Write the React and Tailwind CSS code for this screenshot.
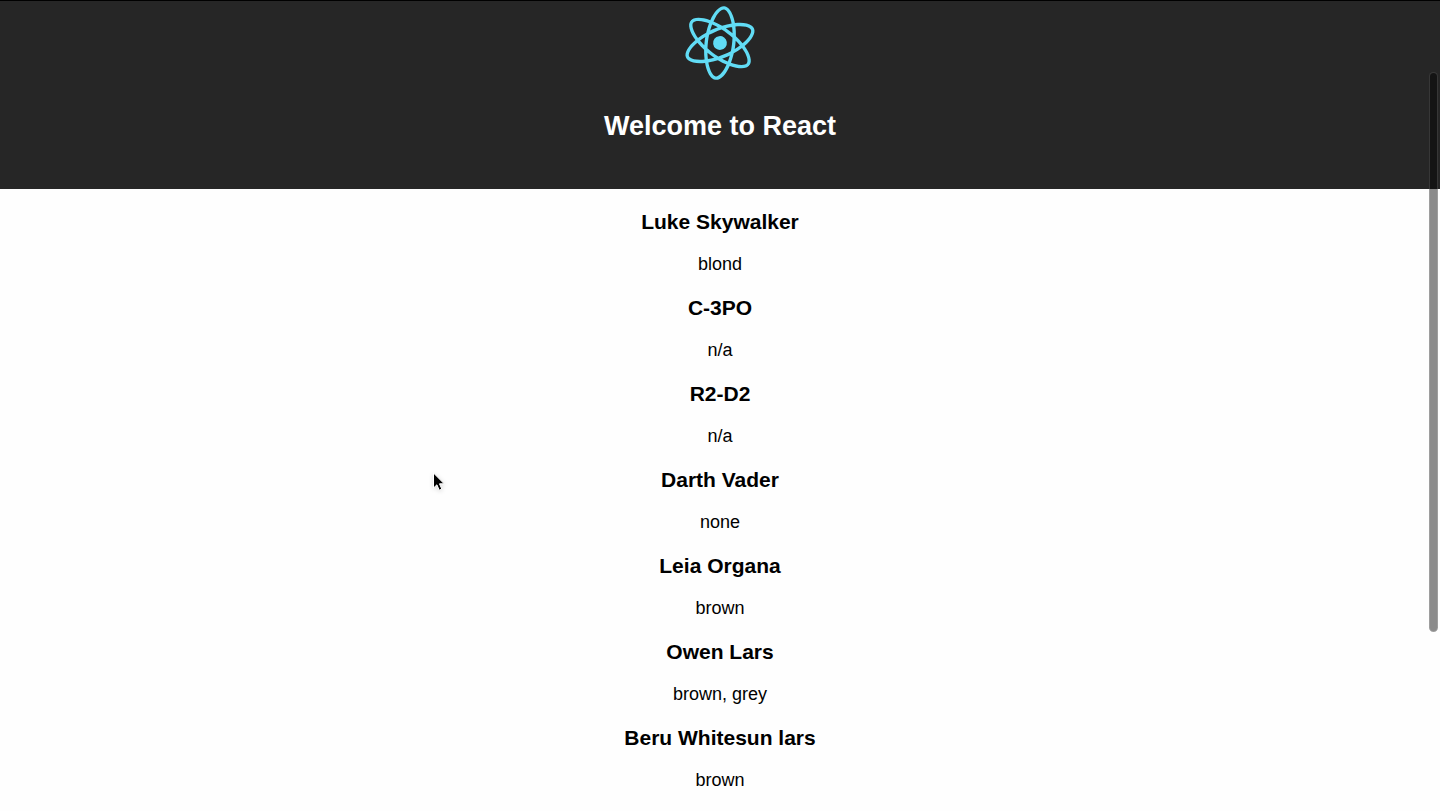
import { SiReact } from "react-icons/si";

const people = [
  { name: "Luke Skywalker", hair: "blond" },
  { name: "C-3PO", hair: "n/a" },
  { name: "R2-D2", hair: "n/a" },
  { name: "Darth Vader", hair: "none" },
  { name: "Leia Organa", hair: "brown" },
  { name: "Owen Lars", hair: "brown, grey" },
  { name: "Beru Whitesun lars", hair: "brown" },
];

function Pointer() {
  return (
    <svg
      className="pointer-events-none absolute top-[471px] left-[431px] h-6 w-4 drop-shadow-sm"
      viewBox="0 0 16 24"
      aria-hidden="true"
    >
      <path
        d="M2.5 2v15l3.4-3.2 2.3 5.4 2.6-1.1-2.3-5.3h4.7z"
        fill="#000"
        stroke="#fff"
        strokeWidth="1"
      />
    </svg>
  );
}

export default function App() {
  return (
    <div className="relative min-h-screen bg-[#fefefe] text-center font-['Liberation_Sans',Arial,sans-serif] text-black">
      <header className="flex flex-col items-center border-t border-black bg-[#262626] pt-[5px] pb-[45px] text-white">
        <SiReact
          className="h-[74px] w-[74px] rotate-[37deg] text-[#61dcf5]"
          role="img"
          aria-label="React logo"
        />
        <h1 className="mt-7 text-[27px] leading-9 font-bold">Welcome to React</h1>
      </header>
      <main className="pt-[11px]">
        {people.map((person) => (
          <article key={person.name}>
            <h2 className="text-[21px] leading-[43px] font-bold">{person.name}</h2>
            <p className="text-lg leading-[43px]">{person.hair}</p>
          </article>
        ))}
      </main>
      <div
        className="absolute top-[72px] right-0.5 h-[560px] w-[9px] rounded-full border border-white/15 bg-black/45"
        aria-hidden="true"
      />
      <Pointer />
    </div>
  );
}
